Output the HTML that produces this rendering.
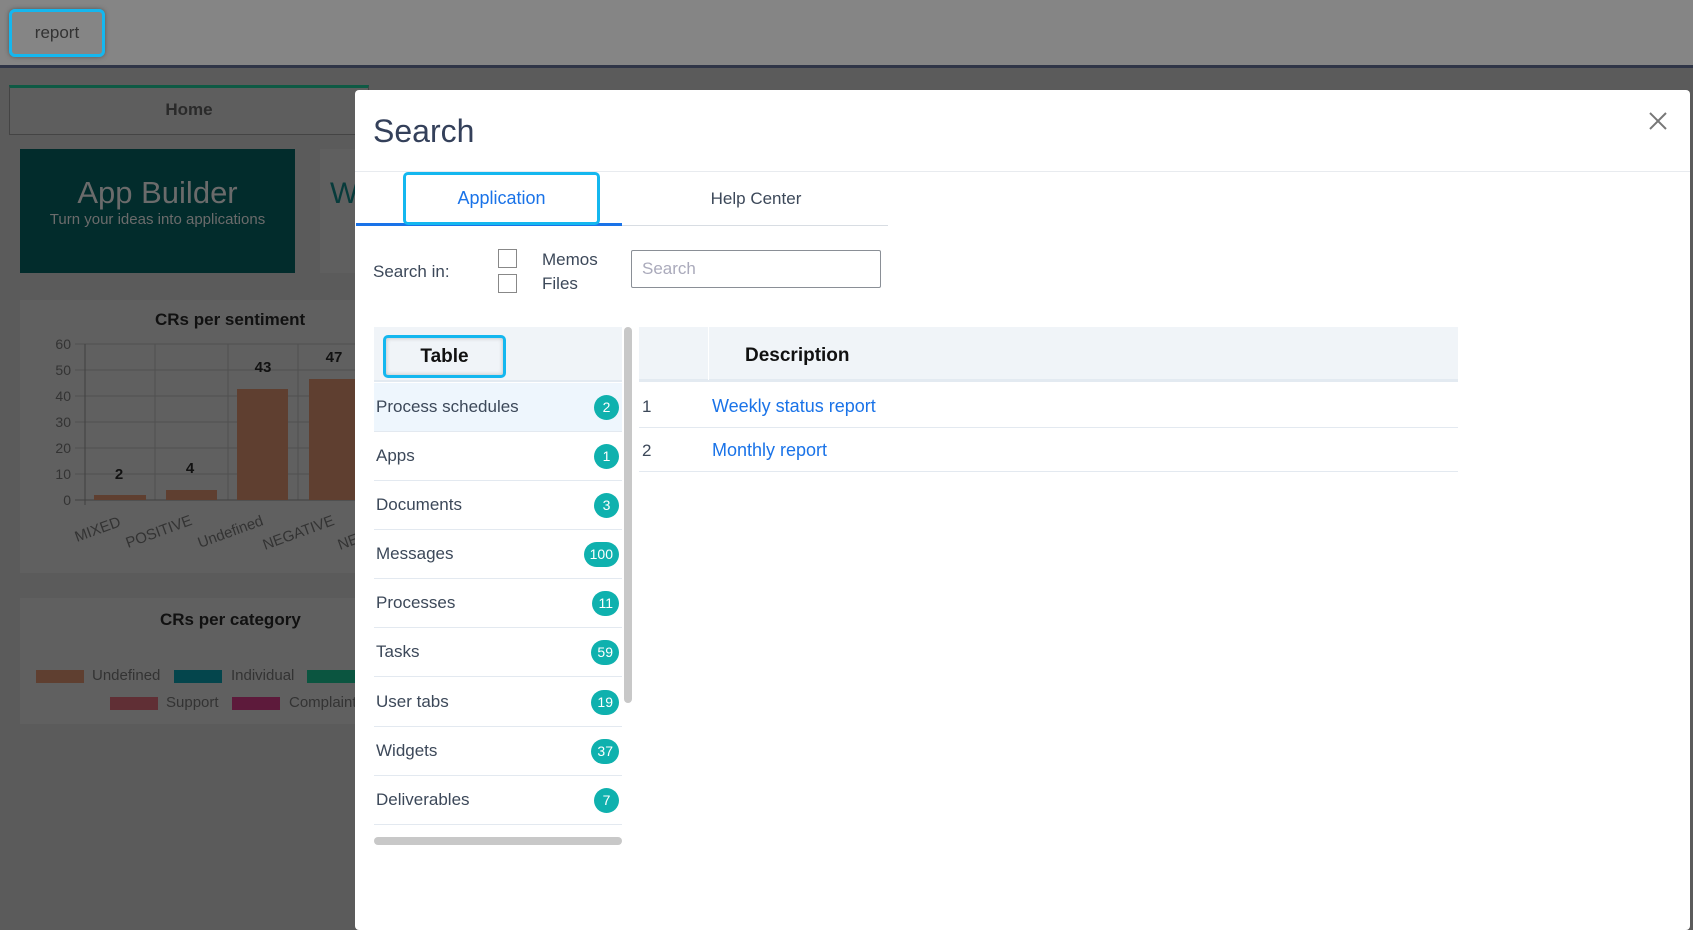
<!DOCTYPE html>
<html><head><meta charset="utf-8">
<style>
*{box-sizing:border-box;margin:0;padding:0}
body{width:1693px;height:921px;overflow:hidden;position:relative;background:#5b5b5b;font-family:"Liberation Sans",sans-serif}
.a{position:absolute}
.t{font-family:"Liberation Sans",sans-serif}
.row{position:absolute;left:374px;width:248px;height:49px;border-bottom:1px solid #e3e9f0;color:#3c4859;font-size:17px;line-height:48px;padding-left:2px}
.bd{position:absolute;top:12px;height:25px;min-width:25px;border-radius:13px;background:#0fb1ae;color:#fff;font-size:14px;line-height:25px;text-align:center;padding:0 6px}
</style></head><body>
<div class="a" style="left:0;top:0;width:1693px;height:66px;background:#858585"></div>
<div class="a" style="left:0;top:65px;width:1693px;height:3px;background:#2f3547"></div>
<div class="a t" style="left:9px;top:9px;width:96px;height:48px;border:3px solid #14b7ef;border-radius:6px;color:#333;font-size:17px;line-height:42px;text-align:center;box-shadow:0 0 4px #555">report</div>
<div class="a" style="left:9px;top:85px;width:360px;height:50px;border:1px solid #444;border-top:3px solid #0e5a44;background:#5e5e5e;color:#2a2a2a;font-weight:bold;font-size:17px;text-align:center;line-height:44px">Home</div>
<div class="a t" style="left:20px;top:149px;width:275px;height:124px;background:#022c2c;color:#6b6b6b;text-align:center">
<div style="font-size:31px;margin-top:26px">App Builder</div><div style="font-size:15px">Turn your ideas into applications</div></div>
<div class="a" style="left:320px;top:149px;width:40px;height:124px;background:#5f5f5f;color:#073b3b;font-size:30px;padding:28px 10px">W</div>
<div class="a" style="left:20px;top:300px;width:340px;height:273px;background:#606060"></div>
<div class="a" style="left:20px;top:598px;width:340px;height:126px;background:#606060"></div>
<div class="a" style="left:155px;top:310px;font-weight:bold;font-size:17px;color:#111">CRs per sentiment</div>
<svg class="a" style="left:0;top:330px" width="360" height="220">
<g stroke="#505050" stroke-width="1">
<line x1="75" y1="14" x2="360" y2="14"/><line x1="75" y1="40" x2="360" y2="40"/><line x1="75" y1="66" x2="360" y2="66"/><line x1="75" y1="92" x2="360" y2="92"/><line x1="75" y1="118" x2="360" y2="118"/><line x1="75" y1="144" x2="360" y2="144"/>
<line x1="155" y1="14" x2="155" y2="170"/><line x1="228" y1="14" x2="228" y2="170"/><line x1="298" y1="14" x2="298" y2="170"/>
</g>
<line x1="85" y1="14" x2="85" y2="175" stroke="#404040"/><line x1="75" y1="170" x2="360" y2="170" stroke="#404040"/>
<g fill="#5f3f30"><rect x="94" y="165" width="52" height="5"/><rect x="166" y="160" width="51" height="10"/><rect x="237" y="59" width="51" height="111"/><rect x="309" y="49" width="51" height="121"/></g>
<g font-size="14" fill="#333" text-anchor="end" font-family="Liberation Sans"><text x="71" y="19">60</text><text x="71" y="45">50</text><text x="71" y="71">40</text><text x="71" y="97">30</text><text x="71" y="123">20</text><text x="71" y="149">10</text><text x="71" y="175">0</text></g>
<g font-size="15" font-weight="bold" fill="#111" text-anchor="middle" font-family="Liberation Sans"><text x="119" y="149">2</text><text x="190" y="143">4</text><text x="263" y="42">43</text><text x="334" y="32">47</text></g>
<g font-size="15" fill="#333" font-family="Liberation Sans"><text transform="translate(77,212) rotate(-20)">MIXED</text><text transform="translate(128,218) rotate(-20)">POSITIVE</text><text transform="translate(200,218) rotate(-20)">Undefined</text><text transform="translate(265,220) rotate(-20)">NEGATIVE</text><text transform="translate(340,220) rotate(-20)">NE</text></g>
</svg>
<div class="a" style="left:160px;top:610px;font-weight:bold;font-size:17px;color:#111">CRs per category</div>
<div class="a" style="left:36px;top:670px;width:48px;height:13px;background:#5f3f30"></div><div class="a" style="left:92px;top:667px;font-size:15px;color:#333">Undefined</div>
<div class="a" style="left:174px;top:670px;width:48px;height:13px;background:#04454c"></div><div class="a" style="left:231px;top:667px;font-size:15px;color:#333">Individual</div>
<div class="a" style="left:307px;top:670px;width:50px;height:13px;background:#0b5540"></div>
<div class="a" style="left:110px;top:697px;width:48px;height:13px;background:#602f35"></div><div class="a" style="left:166px;top:694px;font-size:15px;color:#333">Support</div>
<div class="a" style="left:232px;top:697px;width:48px;height:13px;background:#5d1a3b"></div><div class="a" style="left:289px;top:694px;font-size:15px;color:#333">Complaint</div>

<div class="a" style="left:355px;top:90px;width:1335px;height:840px;background:#fff;border-radius:4px"></div>
<div class="a t" style="left:373px;top:113px;font-size:32px;color:#34405a">Search</div>
<svg class="a" style="left:1649px;top:112px" width="18" height="18"><path d="M1 1L17 17M17 1L1 17" stroke="#777" stroke-width="2"/></svg>
<div class="a" style="left:355px;top:171px;width:1335px;height:1px;background:#e8ebef"></div>
<div class="a" style="left:356px;top:225px;width:532px;height:1px;background:#d8dde3"></div>
<div class="a" style="left:356px;top:223px;width:266px;height:3px;background:#1a73e8"></div>
<div class="a t" style="left:403px;top:172px;width:197px;height:53px;border:3px solid #14b7ef;border-radius:5px;color:#1a73e8;font-size:18px;text-align:center;line-height:47px">Application</div>
<div class="a t" style="left:660px;top:189px;width:192px;text-align:center;font-size:17px;color:#3c4859">Help Center</div>
<div class="a t" style="left:373px;top:262px;font-size:17px;color:#3c4859">Search in:</div>
<div class="a" style="left:498px;top:249px;width:19px;height:19px;border:1px solid #888"></div>
<div class="a" style="left:498px;top:274px;width:19px;height:19px;border:1px solid #888"></div>
<div class="a t" style="left:542px;top:250px;font-size:17px;color:#3c4859">Memos</div>
<div class="a t" style="left:542px;top:274px;font-size:17px;color:#3c4859">Files</div>
<div class="a t" style="left:631px;top:250px;width:250px;height:38px;border:1px solid #8a8f96;border-radius:2px;color:#aab;font-size:17px;line-height:36px;padding-left:10px">Search</div>

<div class="a" style="left:374px;top:327px;width:248px;height:55px;background:#f0f4f8;border-bottom:2px solid #e3eaf1"></div>
<div class="a t" style="left:383px;top:335px;width:123px;height:43px;border:3px solid #14b7ef;border-radius:5px;font-size:19px;font-weight:bold;color:#111;text-align:center;line-height:37px;box-shadow:inset 0 0 4px #bbb">Table</div>
<div class="row t" style="top:383px;background:#eef6fd">Process schedules<span class="bd" style="right:3px">2</span></div>
<div class="row t" style="top:432px">Apps<span class="bd" style="right:3px">1</span></div>
<div class="row t" style="top:481px">Documents<span class="bd" style="right:3px">3</span></div>
<div class="row t" style="top:530px">Messages<span class="bd" style="right:3px">100</span></div>
<div class="row t" style="top:579px">Processes<span class="bd" style="right:3px">11</span></div>
<div class="row t" style="top:628px">Tasks<span class="bd" style="right:3px">59</span></div>
<div class="row t" style="top:678px">User tabs<span class="bd" style="right:3px">19</span></div>
<div class="row t" style="top:727px">Widgets<span class="bd" style="right:3px">37</span></div>
<div class="row t" style="top:776px">Deliverables<span class="bd" style="right:3px">7</span></div>
<div class="a" style="left:624px;top:327px;width:8px;height:376px;background:#c8c8c8;border-radius:4px"></div>
<div class="a" style="left:374px;top:837px;width:248px;height:8px;background:#c8c8c8;border-radius:4px"></div>

<div class="a" style="left:639px;top:327px;width:819px;height:55px;background:#f0f4f8;border-bottom:3px solid #e3eaf1"></div>
<div class="a" style="left:708px;top:327px;width:1px;height:53px;background:#fff"></div>
<div class="a t" style="left:745px;top:345px;font-size:19px;font-weight:bold;color:#111">Description</div>
<div class="a" style="left:639px;top:427px;width:819px;height:1px;background:#e3e9f0"></div>
<div class="a" style="left:639px;top:471px;width:819px;height:1px;background:#e3e9f0"></div>
<div class="a t" style="left:642px;top:397px;font-size:17px;color:#3c4859">1</div>
<div class="a t" style="left:712px;top:396px;font-size:18px;color:#1a73e8">Weekly status report</div>
<div class="a t" style="left:642px;top:441px;font-size:17px;color:#3c4859">2</div>
<div class="a t" style="left:712px;top:440px;font-size:18px;color:#1a73e8">Monthly report</div>
</body></html>
